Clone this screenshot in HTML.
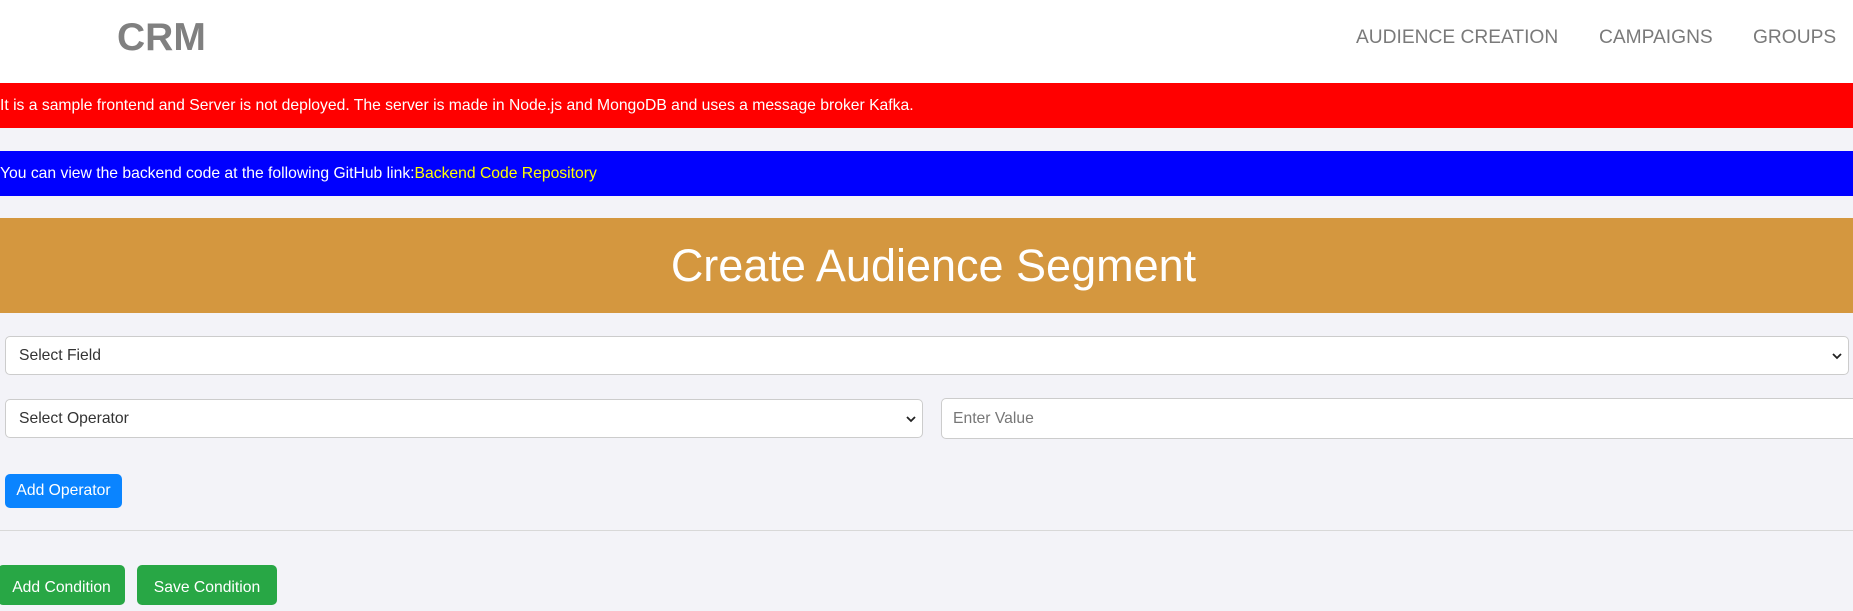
<!DOCTYPE html>
<html><head><meta charset="utf-8"><style>
*{box-sizing:border-box;margin:0;padding:0}
body{width:1853px;height:589px;overflow:hidden;background:#f3f3f8;font-family:"Liberation Sans",Arial,sans-serif;position:relative}
.a{position:absolute}
.nav{left:0;top:0;width:1853px;height:83px;background:#fff}
.crm{left:117px;top:16px;font-size:39px;font-weight:bold;color:#808080;line-height:44px}
.nl{top:26px;font-size:19.2px;color:#7a7a7a;line-height:24px}
.bar{left:0;width:1853px;color:#fff;font-size:15.7px;line-height:45px;height:45px}
.title{left:0;top:218px;width:1853px;height:95px;background:#d4973f;color:#fff;font-size:45px;text-align:center;line-height:95px;padding-left:14px}
.in{background:#fff;border:1px solid #ccc;border-radius:5px;font-size:15.7px;color:#333;padding-left:13px}
.chev{position:absolute;right:6px;top:50%;margin-top:-4px}
.btn{color:#fff;font-size:15.7px;border-radius:5px;text-align:center}
</style></head><body>
<div class="a nav"></div>
<div class="a crm">CRM</div>
<div class="a nl" style="left:1356px">AUDIENCE CREATION</div>
<div class="a nl" style="left:1599px">CAMPAIGNS</div>
<div class="a nl" style="left:1753px">GROUPS</div>
<div class="a bar" style="top:83px;background:#f00">It is a sample frontend and Server is not deployed. The server is made in Node.js and MongoDB and uses a message broker Kafka.</div>
<div class="a bar" style="top:151px;background:#00f">You can view the backend code at the following GitHub link:<span style="color:#ff0">Backend Code Repository</span></div>
<div class="a title">Create Audience Segment</div>
<div class="a in" style="left:5px;top:336px;width:1844px;height:39px;line-height:37px">Select Field<svg class="chev" width="10" height="8" viewBox="0 0 10 8"><path d="M1 2l4 4 4-4" stroke="#222" stroke-width="1.8" fill="none"/></svg></div>
<div class="a in" style="left:5px;top:399px;width:918px;height:39px;line-height:37px">Select Operator<svg class="chev" width="10" height="8" viewBox="0 0 10 8"><path d="M1 2l4 4 4-4" stroke="#222" stroke-width="1.8" fill="none"/></svg></div>
<div class="a in" style="left:941px;top:398px;width:930px;height:41px;line-height:39px;color:#777;padding-left:11px">Enter Value</div>
<div class="a btn" style="left:5px;top:474px;width:117px;height:34px;line-height:34px;background:#0a84ff">Add Operator</div>
<div class="a" style="left:0;top:530px;width:1853px;height:1px;background:#d8d8d8"></div>
<div class="a btn" style="left:-2px;top:565px;width:127px;height:40px;line-height:46px;background:#28a745">Add Condition</div>
<div class="a btn" style="left:137px;top:565px;width:140px;height:40px;line-height:46px;background:#28a745">Save Condition</div>
</body></html>
